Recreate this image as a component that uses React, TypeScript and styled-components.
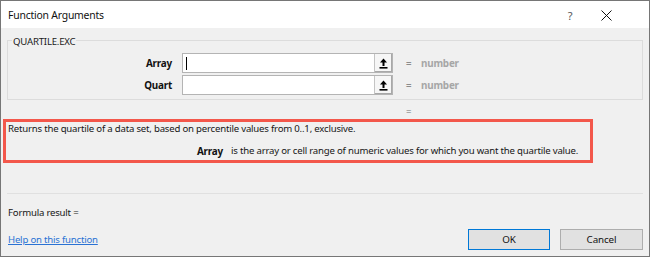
import React from "react";
import styled, { createGlobalStyle } from "styled-components";

const Global = createGlobalStyle`
  html, body { margin: 0; padding: 0; background: #ffffff; }
  body {
    font-family: "Noto Sans", "Open Sans", sans-serif;
    font-size: 9.6px;
    letter-spacing: -0.2px;
    color: #161616;
  }
  * { box-sizing: border-box; }
`;

const Window = styled.div`
  width: 650px;
  height: 257px;
  border: 1px solid #767676;
  display: flex;
  flex-direction: column;
  overflow: hidden;
`;

const TitleBar = styled.div`
  flex: 0 0 27px;
  background: #ffffff;
  display: flex;
  align-items: center;
  padding: 1px 0 0 7px;
`;

const Title = styled.div`
  font-size: 10.4px;
  color: #111;
  flex: 1;
`;

const HelpGlyph = styled.div`
  font-size: 11px;
  color: #555;
  width: 12px;
  margin-right: 25px;
  text-align: center;
`;

const CloseBtn = styled.div`
  width: 11px;
  height: 11px;
  margin-right: 37px;
  display: flex;
  align-items: center;
  justify-content: center;
`;

const Body = styled.div`
  flex: 1;
  background: #f0f0f0;
  display: flex;
  flex-direction: column;
  padding: 0 6px 7px 0;
`;

const Group = styled.fieldset`
  margin: 3px 0 0 6px;
  padding: 4px 0 4px 0;
  border: 1px solid #dcdcdc;
  min-width: 0;
`;

const Legend = styled.legend`
  line-height: 14px;
  padding: 4px 1px 0 1px;
  margin-left: 4px;
  color: #1a1a1a;
`;

const ArgGrid = styled.div`
  display: grid;
  grid-template-columns: 174px 211px 28px 1fr;
  row-gap: 2px;
  align-items: center;
`;

const ArgLabel = styled.div`
  text-align: right;
  padding-right: 10px;
  font-weight: 700;
  font-size: 9.9px;
  color: #111;
`;

const InputWrap = styled.div`
  display: flex;
  height: 20px;
  border: 1px solid #b4b4b4;
  background: #ffffff;
`;

const Field = styled.div<{ $focused?: boolean }>`
  flex: 1;
  display: flex;
  align-items: center;
  padding-left: 3px;
  &::before {
    content: "";
    display: ${(p) => (p.$focused ? "block" : "none")};
    width: 1px;
    height: 13px;
    background: #000;
  }
`;

const RefButton = styled.div`
  width: 18px;
  border-left: 1px solid #c4c4c4;
  background: #f6f6f6;
  box-shadow: inset -1px -1px 0 #a8a8a8;
  display: flex;
  align-items: center;
  justify-content: center;
`;

const Eq = styled.div`
  color: #8c8c8c;
  font-weight: 700;
  padding-left: 13px;
`;

const ValueHint = styled.div`
  color: #a6a6a6;
  font-weight: 700;
  font-size: 9.9px;
`;

const ResultLine = styled.div`
  flex: 0 0 19px;
  padding: 6px 0 0 405px;
  color: #707070;
  line-height: 12px;
`;

const Description = styled.div`
  margin-left: 2px;
  width: 590px;
  border: 3px solid #f3574b;
  padding: 0 0 2px 2px;
  display: flex;
  flex-direction: column;
  gap: 8px;
  line-height: 14px;
`;

const DescRow = styled.div`
  display: grid;
  grid-template-columns: 215px 1fr;
  column-gap: 8px;
`;

const DescName = styled.div`
  text-align: right;
  font-weight: 700;
  font-size: 9.9px;
  color: #111;
`;

const Separator = styled.div`
  margin: 30px 0 0 6px;
  flex: 0 0 1px;
  background: #e0e0e0;
`;

const FormulaResult = styled.div`
  padding-left: 7px;
  margin-top: 12px;
  line-height: 14px;
`;

const Footer = styled.div`
  margin-top: 9px;
  display: flex;
  align-items: center;
  padding-left: 7px;
`;

const HelpLink = styled.a`
  color: #2a72d4;
  text-decoration: underline;
  flex: 1;
  cursor: pointer;
  line-height: 14px;
`;

const Button = styled.button<{ $default?: boolean }>`
  width: ${(p) => (p.$default ? "82px" : "83px")};
  height: 21px;
  margin-left: ${(p) => (p.$default ? "0" : "10px")};
  background: #e1e1e1;
  border: 1px solid ${(p) => (p.$default ? "#0078d7" : "#adadad")};
  font-family: inherit;
  font-size: 9.8px;
  letter-spacing: -0.1px;
  color: #111;
  padding: 0;
`;

const UpArrow = () => (
  <svg width="9" height="11" viewBox="0 0 9 11">
    <path d="M4.5 0.5 L8 4.5 L5.5 4.5 L5.5 8 L3.5 8 L3.5 4.5 L1 4.5 Z" fill="#000" />
    <rect x="0.5" y="9" width="8" height="1.6" fill="#000" />
  </svg>
);

const CloseIcon = () => (
  <svg width="11" height="11" viewBox="0 0 11 11">
    <path d="M0.5 0.5 L10.5 10.5 M10.5 0.5 L0.5 10.5" stroke="#111" strokeWidth="1" />
  </svg>
);

const args = [
  { name: "Array", focused: true },
  { name: "Quart", focused: false },
];

export default function App() {
  return (
    <>
      <Global />
      <Window>
        <TitleBar>
          <Title>Function Arguments</Title>
          <HelpGlyph>?</HelpGlyph>
          <CloseBtn>
            <CloseIcon />
          </CloseBtn>
        </TitleBar>
        <Body>
          <Group>
            <Legend>QUARTILE.EXC</Legend>
            <ArgGrid>
              {args.map((a) => (
                <React.Fragment key={a.name}>
                  <ArgLabel>{a.name}</ArgLabel>
                  <InputWrap>
                    <Field $focused={a.focused} />
                    <RefButton>
                      <UpArrow />
                    </RefButton>
                  </InputWrap>
                  <Eq>=</Eq>
                  <ValueHint>number</ValueHint>
                </React.Fragment>
              ))}
            </ArgGrid>
          </Group>
          <ResultLine>=</ResultLine>
          <Description>
            <div>Returns the quartile of a data set, based on percentile values from 0..1, exclusive.</div>
            <DescRow>
              <DescName>Array</DescName>
              <div>is the array or cell range of numeric values for which you want the quartile value.</div>
            </DescRow>
          </Description>
          <Separator />
          <FormulaResult>Formula result =</FormulaResult>
          <Footer>
            <HelpLink>Help on this function</HelpLink>
            <Button $default>OK</Button>
            <Button>Cancel</Button>
          </Footer>
        </Body>
      </Window>
    </>
  );
}
